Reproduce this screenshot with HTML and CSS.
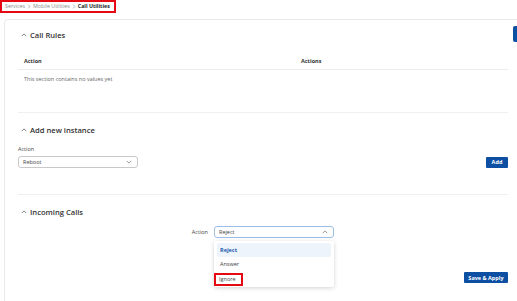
FILE: index.html
```html
<!DOCTYPE html>
<html lang="en">
<head>
<meta charset="utf-8">
<title>Call Utilities</title>
<link rel="stylesheet" href="styles.css">
</head>
<body>
<nav class="breadcrumb">
  <span class="crumb">Services</span>
  <svg class="sep" viewBox="0 0 6 8" width="4" height="5"><path d="M1.5 1 L4.5 4 L1.5 7" fill="none" stroke="#888" stroke-width="1"/></svg>
  <span class="crumb">Mobile Utilities</span>
  <svg class="sep" viewBox="0 0 6 8" width="4" height="5"><path d="M1.5 1 L4.5 4 L1.5 7" fill="none" stroke="#888" stroke-width="1"/></svg>
  <span class="crumb current">Call Utilities</span>
</nav>

<div class="side-tab"></div>

<main class="card">
  <section class="section first">
    <h2 class="section-title">
      <svg class="chev" viewBox="0 0 8 5" width="6" height="4"><path d="M1 4 L4 1 L7 4" fill="none" stroke="#555" stroke-width="1"/></svg>
      Call Rules
    </h2>
    <div class="table">
      <div class="thead">
        <div class="col col-a">Action</div>
        <div class="col col-b">Actions</div>
      </div>
      <div class="empty">This section contains no values yet</div>
    </div>
  </section>

  <section class="section second">
    <h2 class="section-title">
      <svg class="chev" viewBox="0 0 8 5" width="6" height="4"><path d="M1 4 L4 1 L7 4" fill="none" stroke="#555" stroke-width="1"/></svg>
      Add new instance
    </h2>
    <div class="field-label">Action</div>
    <div class="add-row">
      <div class="select">
        <span>Reboot</span>
        <svg class="sel-chev" viewBox="0 0 8 5" width="6" height="4"><path d="M1 1 L4 4 L7 1" fill="none" stroke="#777" stroke-width="1"/></svg>
      </div>
      <button class="btn btn-add">Add</button>
    </div>
  </section>

  <section class="section third">
    <h2 class="section-title">
      <svg class="chev" viewBox="0 0 8 5" width="6" height="4"><path d="M1 4 L4 1 L7 4" fill="none" stroke="#555" stroke-width="1"/></svg>
      Incoming Calls
    </h2>
    <div class="inline-row">
      <label class="inline-label">Action</label>
      <div class="select-wrap">
        <div class="select open">
          <span>Reject</span>
          <svg class="sel-chev" viewBox="0 0 8 5" width="6" height="4"><path d="M1 4 L4 1 L7 4" fill="none" stroke="#777" stroke-width="1"/></svg>
        </div>
        <ul class="menu">
          <li class="item active">Reject</li>
          <li class="item">Answer</li>
          <li class="item marked">Ignore</li>
        </ul>
      </div>
    </div>
    <div class="save-row">
      <button class="btn btn-save">Save &amp; Apply</button>
    </div>
  </section>
</main>
</body>
</html>
```

FILE: styles.css
```css
html, body {
  margin: 0;
  padding: 0;
  background: #ffffff;
  overflow: hidden;
  width: 517px;
  height: 301px;
}
body {
  font-family: "Open Sans", "Noto Sans", "Liberation Sans", sans-serif;
  color: #333;
  position: relative;
}

.breadcrumb {
  display: flex;
  width: fit-content;
  align-items: center;
  gap: 2px;
  height: 9px;
  padding: 0 4px 0 3px;
  border: 2px solid #e50914;
  font-size: 5.3px;
  line-height: 9px;
  color: #8a8a8a;
  white-space: nowrap;
}
.breadcrumb .current {
  color: #222;
  font-weight: 700;
}
.sep { display: block; }

.side-tab {
  position: absolute;
  left: 513px;
  top: 26px;
  width: 6px;
  height: 16px;
  background: #0d4fa3;
  border-radius: 2px;
}

.card {
  margin: 6px 0 0 4px;
  width: 490px;
  padding: 0 13px 0 13px;
  border: 1px solid #e9e9e9;
  border-radius: 4px;
  height: 285px;
}

.section-title {
  margin: 0;
  display: flex;
  align-items: center;
  gap: 3px;
  padding-left: 3px;
  height: 12px;
  font-size: 7.6px;
  font-weight: 600;
  color: #333;
}
.chev { display: block; }

.section.first { padding-top: 9px; height: 83px; }
.section.second { border-top: 1px solid #efefef; padding-top: 11px; height: 70px; }
.section.third { border-top: 1px solid #efefef; padding-top: 11px; }

.table { margin-top: 12px; }
.thead {
  display: flex;
  height: 16px;
  align-items: center;
  border-bottom: 1px solid #ececec;
  font-size: 5.5px;
  font-weight: 700;
  color: #333;
}
.col-a { width: 277px; padding-left: 6px; }
.col-b { padding-left: 0; }
.empty {
  padding-left: 6px;
  height: 18px;
  line-height: 18px;
  font-size: 5.5px;
  color: #666;
}

.field-label {
  margin-top: 9px;
  font-size: 5.5px;
  line-height: 8px;
  color: #444;
}
.add-row {
  margin-top: 3px;
  display: flex;
  align-items: center;
  justify-content: space-between;
}

.select {
  box-sizing: border-box;
  width: 120px;
  height: 12px;
  border: 1px solid #c9c9c9;
  border-radius: 3px;
  display: flex;
  align-items: center;
  justify-content: space-between;
  padding: 0 5px 0 4px;
  font-size: 5.5px;
  color: #444;
  background: #fff;
}
.select.open {
  border-color: #9dbde6;
  height: 12px;
}
.sel-chev { display: block; }

.btn {
  border: none;
  background: #0d4fa3;
  color: #fff;
  font-family: inherit;
  font-weight: 700;
  font-size: 5.5px;
  border-radius: 1px;
  padding: 0;
  height: 11px;
}
.btn-add { width: 22px; }
.btn-save { width: 44px; }

.inline-row {
  margin-top: 8px;
  display: flex;
  align-items: flex-start;
  gap: 6px;
}
.inline-label {
  width: 190px;
  text-align: right;
  font-size: 5.5px;
  line-height: 12px;
  color: #444;
}
.select-wrap { position: relative; }
.menu {
  position: absolute;
  left: 0;
  top: 15px;
  box-sizing: border-box;
  width: 120px;
  height: 46px;
  margin: 0;
  padding: 2px 3px;
  list-style: none;
  background: #fff;
  border-radius: 2px;
  box-shadow: 0 1px 4px rgba(0, 0, 0, 0.18);
  font-size: 5.5px;
  color: #444;
}
.item {
  height: 14px;
  line-height: 14px;
  padding-left: 3px;
  border-radius: 2px;
}
.item.active {
  background: #eef4fb;
  color: #1d5bab;
  font-weight: 700;
}
.item.marked {
  width: 22px;
  height: 9px;
  line-height: 9px;
  margin: 2px 0 0 -3px;
  padding-left: 3px;
  border: 2px solid #e50914;
  border-radius: 0;
}

.save-row {
  margin-top: 34px;
  display: flex;
  justify-content: flex-end;
}
```
